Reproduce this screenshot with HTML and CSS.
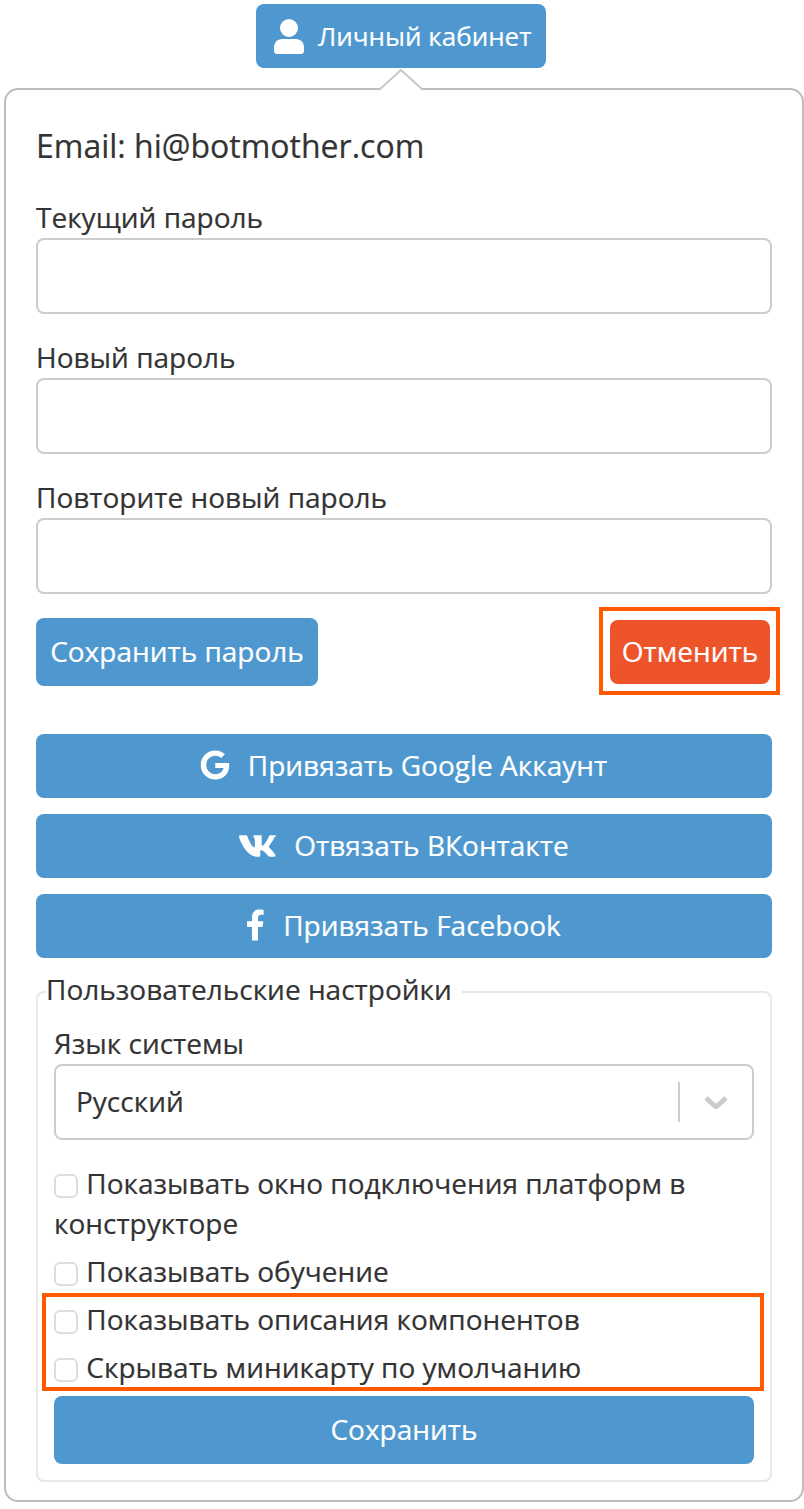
FILE: index.html
```html
<!DOCTYPE html>
<html lang="ru">
<head>
<meta charset="utf-8">
<title>Личный кабинет</title>
<link rel="stylesheet" href="styles.css">
</head>
<body>
<div class="page">
  <header class="top">
    <button class="btn top-btn" type="button">
      <svg class="ico-user" viewBox="0 0 30 35"><circle cx="15" cy="9" r="9"/><path d="M8 20h14c4.4 0 8 3.6 8 8v4c0 1.7-1.3 3-3 3H3c-1.700 0-3-1.300-3-3v-4c0-4.400 3.600-8 8-8z"/></svg>
      <span>Личный кабинет</span>
    </button>
  </header>
  <main class="pop">
    <svg class="pop-arrow" viewBox="0 0 44 22"><path d="M0 21 22 1 44 21" /></svg>
    <div class="email">Email: hi@botmother.com</div>
    <div class="group">
      <label class="lbl">Текущий пароль</label>
      <input class="field" type="password">
    </div>
    <div class="group">
      <label class="lbl">Новый пароль</label>
      <input class="field" type="password">
    </div>
    <div class="group">
      <label class="lbl">Повторите новый пароль</label>
      <input class="field" type="password">
    </div>
    <div class="actions">
      <button class="btn save-pass" type="button">Сохранить пароль</button>
      <button class="btn cancel" type="button">Отменить</button>
    </div>
    <div class="social">
      <button class="btn wide wide-g" type="button">
        <svg class="ico-g" viewBox="0 0 488 512"><path d="M488 261.800C488 403.300 391.100 504 248 504 110.800 504 0 393.200 0 256S110.800 8 248 8c66.800 0 123 24.500 166.300 64.900l-67.500 64.900C258.500 52.600 94.300 116.600 94.300 256c0 86.500 69.100 156.600 153.700 156.600 98.200 0 135-70.400 140.800-106.900H248v-85.300h236.100c2.300 12.700 3.900 24.900 3.900 41.400z"/></svg>
        <span>Привязать Google Аккаунт</span>
      </button>
      <button class="btn wide wide-vk" type="button">
        <svg class="ico-vk" viewBox="0 96 576 318"><path d="M545 117.700c3.700-12.500 0-21.700-17.800-21.700h-58.900c-15 0-21.900 7.900-25.600 16.700 0 0-29.500 72.600-71.300 119.600-13.500 13.600-19.700 17.900-27.100 17.900-3.700 0-9.200-4.300-9.200-16.800V117.700c0-15-4.200-21.700-16.600-21.700h-92.600c-9.400 0-15 7-15 13.500 0 14.200 21.200 17.500 23.400 57.200v86.300c0 18.900-3.400 22.400-10.900 22.400-20 0-68.600-73-97.400-156.500-5.800-16.200-11.500-22.700-26.600-22.700H20.800C4 96 0 103.900 0 112.700c0 15.500 20 92.500 93 194.200 48.700 69.400 117.200 107.100 179.600 107.100 37.400 0 42-8.400 42-22.800 0-66.300-3.400-72.600 15.400-72.600 8.700 0 23.700 4.400 58.600 37.900 39.900 39.900 46.500 57.500 68.800 57.500h58.900c16.800 0 25.300-8.400 20.400-25-11.200-34.900-86.900-106.700-90.300-111.500-8.700-11.200-6.200-16.200 0-26.200.1-.1 71.900-100.600 79.200-134.600z"/></svg>
        <span>Отвязать ВКонтакте</span>
      </button>
      <button class="btn wide" type="button">
        <svg class="ico-f" viewBox="22 0 298 512"><path d="M279.140 288l14.220-92.660h-88.910v-60.130c0-25.350 12.420-50.060 52.240-50.060h40.420V6.260S260.430 0 225.360 0c-73.220 0-121.080 44.380-121.080 124.720v70.620H22.890V288h81.390v224h100.170V288z"/></svg>
        <span>Привязать Facebook</span>
      </button>
    </div>
    <fieldset class="prefs">
      <legend class="prefs-title">Пользовательские настройки</legend>
      <label class="lbl">Язык системы</label>
      <div class="select">
        <span class="select-value">Русский</span>
        <span class="select-sep"></span>
        <svg class="select-chev" viewBox="0 0 24 13"><path d="M2 2l10 9 10-9"/></svg>
      </div>
      <div class="opts">
        <label class="opt"><input class="chk" type="checkbox"> Показывать окно подключения платформ в конструкторе</label>
        <label class="opt"><input class="chk" type="checkbox"> Показывать обучение</label>
        <div class="marked">
          <label class="opt"><input class="chk" type="checkbox"> Показывать описания компонентов</label>
          <label class="opt"><input class="chk" type="checkbox"> Скрывать миникарту по умолчанию</label>
        </div>
      </div>
      <button class="btn save" type="button">Сохранить</button>
    </fieldset>
  </main>
</div>
</body>
</html>
```
FILE: styles.css
```css
* { box-sizing: border-box; }
html, body { margin: 0; padding: 0; background: #fff; }
body {
  font-family: "Open Sans", "Noto Sans", sans-serif;
  font-size: 28px;
  line-height: 40px;
  color: #333;
  -webkit-text-stroke: 0.2px;
}
.page { padding: 4px 0 0 4px; height: 1509px; overflow: hidden; }
.top { display: flex; justify-content: center; height: 64px; padding-right: 6px; }
.btn {
  display: flex;
  align-items: center;
  justify-content: center;
  border: 0;
  border-radius: 8px;
  background: #4e98cf;
  color: #fff;
  font: inherit;
  padding: 0 0 2px;
}
.top-btn {
  width: 290px;
  height: 64px;
  font-size: 26px;
  gap: 14px;
  justify-content: flex-start;
  padding: 0 0 0 18px;
}
.ico-user { width: 30px; height: 35px; fill: #fff; stroke: none; }
.pop {
  position: relative;
  margin-top: 20px;
  width: 800px;
  height: 1414px;
  padding: 30px 30px 0;
  border: 2px solid #bdbdbd;
  border-radius: 14px;
  background: #fff;
}
.pop-arrow {
  position: absolute;
  left: 373px;
  top: -21px;
  width: 44px;
  height: 22px;
  fill: #fff;
  stroke: #c8c8c8;
  stroke-width: 2;
}
.email { font-size: 32px; line-height: 52px; margin-bottom: 26px; }
.group { margin-bottom: 24px; }
.lbl { display: block; font-size: 28px; line-height: 38px; padding-bottom: 2px; }
.field {
  display: block;
  width: 100%;
  height: 76px;
  border: 2px solid #ccc;
  border-radius: 8px;
  background: #fff;
}
.actions { display: flex; justify-content: space-between; margin-bottom: 48px; }
.save-pass { width: 282px; height: 68px; }
.cancel {
  position: relative;
  width: 160px;
  height: 64px;
  margin: 2px;
  background: #ee5429;
}
.cancel::after {
  content: "";
  position: absolute;
  inset: -13px -10px -11px -11px;
  border: 4px solid #ff5a00;
}
.social { display: flex; flex-direction: column; gap: 16px; }
.wide { height: 64px; gap: 18px; }
.wide-g { padding-right: 1px; }
.wide-vk { gap: 16px; }
.ico-g { width: 30px; height: 30px; fill: #fff; stroke: none; }
.ico-vk { width: 39px; height: 22px; fill: #fff; stroke: none; margin-top: 2px; }
.ico-f { width: 18px; height: 32px; fill: #fff; stroke: none; }
.prefs {
  margin: 14px 0 0;
  padding: 0 16px 16px;
  border: 2px solid #e8e8e8;
  border-radius: 8px;
  min-width: 0;
}
.prefs-title {
  margin-left: -8px;
  padding: 0 10px 6px 0;
  font-size: 28px;
  line-height: 34px;
}
.prefs .lbl { margin-top: 12px; }
.select {
  display: flex;
  align-items: center;
  height: 76px;
  padding: 0 24px 2px 20px;
  border: 2px solid #ccc;
  border-radius: 8px;
}
.select-value { flex: 1; }
.select-sep { width: 2px; height: 40px; background: #ccc; margin: 2px 24px 0 0; }
.select-chev { width: 24px; height: 13px; fill: none; stroke: #ccc; stroke-width: 5; margin-top: 2px; }
.opts { margin-top: 23px; display: flex; flex-direction: column; gap: 8px; }
.opt { display: block; }
.marked { position: relative; display: flex; flex-direction: column; gap: 8px; }
.marked::after {
  content: "";
  position: absolute;
  inset: -6px -10px -4px -12px;
  border: 4px solid #ff5a00;
  pointer-events: none;
}
.chk {
  appearance: none;
  display: inline-block;
  width: 24px;
  height: 24px;
  margin: 0 1px 0 0;
  vertical-align: -4px;
  border: 2px solid #ddd;
  border-radius: 6px;
  background: #fff;
}
.save { width: 100%; height: 68px; margin-top: 9px; }
```
